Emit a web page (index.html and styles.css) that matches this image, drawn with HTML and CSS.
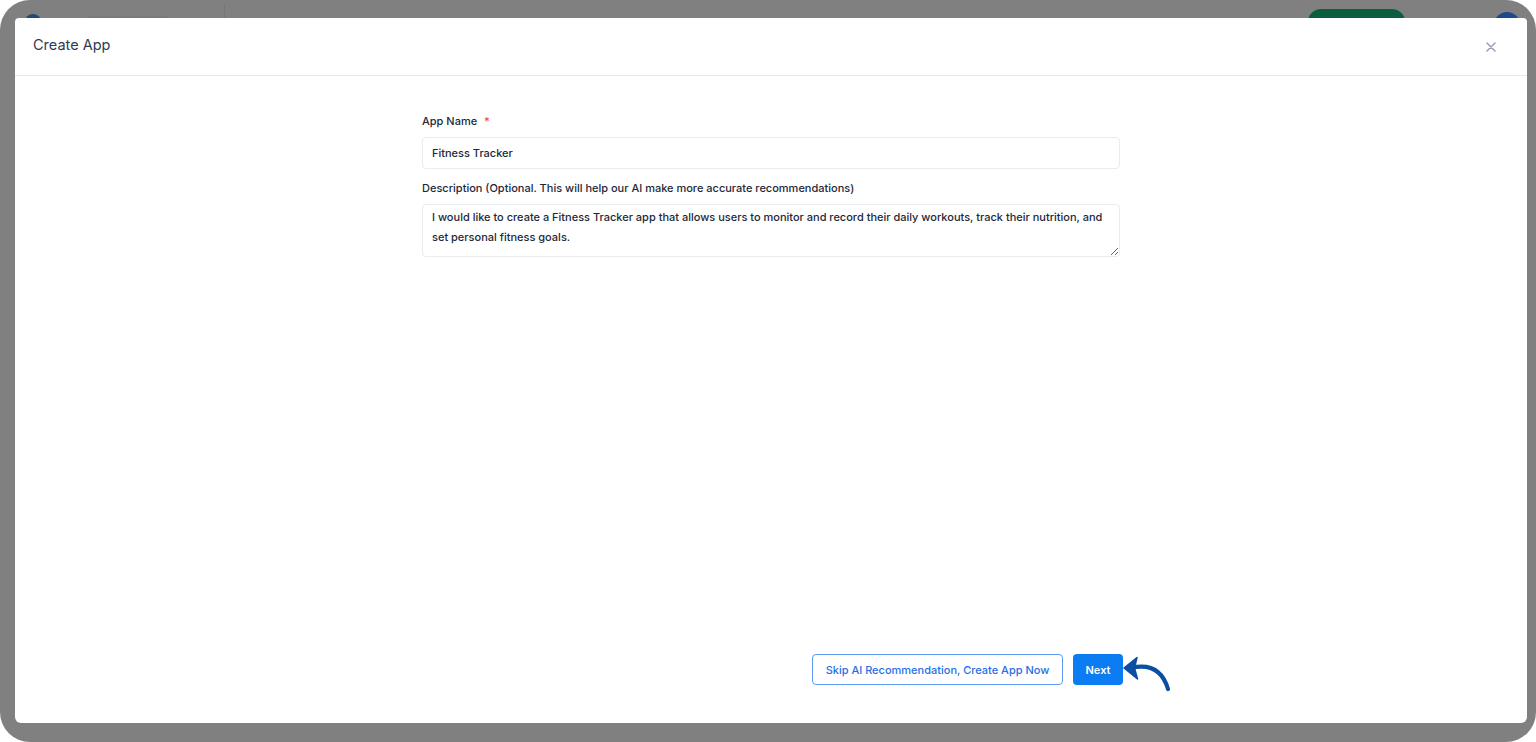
FILE: index.html
```html
<!DOCTYPE html>
<html lang="en">
<head>
    <meta charset="UTF-8">
    <meta name="viewport" content="width=device-width, initial-scale=1.0">
    <title>Create App</title>
    <link rel="stylesheet" href="styles.css">
</head>
<body>
    <div class="frame">
        <!-- the app behind the overlay, only its top edge shows -->
        <div class="bg-logo"></div>
        <div class="bg-brand"></div>
        <div class="bg-divider"></div>
        <div class="bg-button"></div>
        <div class="bg-avatar"></div>

        <div class="modal">
            <div class="modal-header">
                <h2>Create App</h2>
                <button class="close-btn" aria-label="Close">
                    <svg width="10" height="10" viewBox="0 0 10 10">
                        <path d="M1 1L9 9M9 1L1 9" stroke="#98a2b3" stroke-width="1.6" stroke-linecap="round"/>
                    </svg>
                </button>
            </div>
            <div class="modal-body">
                <div class="form">
                    <label class="field-label">App Name <span class="req">*</span></label>
                    <input class="text-input" type="text" value="Fitness Tracker">

                    <label class="field-label">Description (Optional. This will help our AI make more accurate recommendations)</label>
                    <textarea class="text-area">I would like to create a Fitness Tracker app that allows users to monitor and record their daily workouts, track their nutrition, and set personal fitness goals.</textarea>
                </div>
            </div>
            <div class="modal-footer">
                <div class="footer-inner">
                    <button class="btn-outline">Skip AI Recommendation, Create App Now</button>
                    <button class="btn-primary">Next</button>
                    <svg class="pointer" width="54" height="42" viewBox="0 0 54 42">
                        <path d="M9 15 C 26 11, 40 16, 46 36" fill="none" stroke="#0b4ea2" stroke-width="4.2" stroke-linecap="round"/>
                        <path d="M2 15 L15 4.5 L12.5 15 L15.5 26 Z" fill="#0b4ea2" stroke="#0b4ea2" stroke-width="1.5" stroke-linejoin="round"/>
                    </svg>
                </div>
            </div>
        </div>
    </div>
</body>
</html>
```

FILE: styles.css
```css
html, body {
    margin: 0;
    padding: 0;
    background: #ffffff;
}
body {
    font-family: Inter, "Noto Sans", Arial, sans-serif;
    width: 1536px;
    height: 742px;
    overflow: hidden;
}
.frame {
    position: relative;
    box-sizing: border-box;
    width: 1536px;
    height: 742px;
    background: #808080;
    border-radius: 30px;
    padding: 18px 9px 19px 15px;
    display: flex;
    overflow: hidden;
}

/* dimmed page under the overlay */
.bg-logo {
    position: absolute;
    left: 25px;
    top: 14px;
    width: 16px;
    height: 16px;
    border-radius: 50%;
    background: #1f4a78;
}
.bg-brand {
    position: absolute;
    left: 88px;
    top: 16px;
    width: 80px;
    height: 4px;
    background: #7a7a7a;
}
.bg-divider {
    position: absolute;
    left: 224px;
    top: 4px;
    width: 1px;
    height: 14px;
    background: #767676;
}
.bg-button {
    position: absolute;
    left: 1308px;
    top: 9px;
    width: 97px;
    height: 28px;
    border-radius: 13px;
    background: #0b5e3d;
}
.bg-avatar {
    position: absolute;
    left: 1494px;
    top: 12px;
    width: 26px;
    height: 26px;
    border-radius: 50%;
    background: #1b4a8a;
}

.modal {
    position: relative;
    flex: 1;
    background: #ffffff;
    border-radius: 4px 4px 6px 6px;
    display: flex;
    flex-direction: column;
}
.modal-header {
    height: 57px;
    border-bottom: 1px solid #e4e7ec;
    display: flex;
    align-items: center;
    justify-content: space-between;
    padding: 0 30px 0 18px;
}
.modal-header h2 {
    margin: 0 0 4px 0;
    font-size: 14.5px;
    font-weight: 400;
    color: #2f3b52;
}
.close-btn {
    border: none;
    background: none;
    padding: 0;
    width: 12px;
    height: 12px;
    display: flex;
    align-items: center;
    justify-content: center;
    margin-top: 1px;
}
.modal-body {
    flex: 1;
    display: flex;
    justify-content: center;
    padding-top: 37px;
}
.form {
    width: 698px;
    display: flex;
    flex-direction: column;
}
.field-label {
    font-size: 11px;
    font-weight: 500;
    color: #1d2939;
    line-height: 16px;
    margin-bottom: 8px;
}
.req {
    color: #e5484d;
    margin-left: 4px;
}
.text-input {
    box-sizing: border-box;
    height: 32px;
    border: 1px solid #e9ebef;
    border-radius: 4px;
    padding: 0 9px;
    font-family: inherit;
    font-size: 11px;
    font-weight: 500;
    color: #1d2939;
    margin-bottom: 11px;
    outline: none;
}
.text-area {
    box-sizing: border-box;
    height: 53px;
    border: 1px solid #e9ebef;
    border-radius: 4px;
    padding: 2px 9px;
    font-family: inherit;
    font-size: 11px;
    font-weight: 500;
    line-height: 20px;
    color: #1d2939;
    resize: vertical;
    outline: none;
}
.modal-footer {
    display: flex;
    justify-content: center;
    padding-bottom: 38px;
}
.footer-inner {
    position: relative;
    width: 704px;
    display: flex;
    justify-content: flex-end;
    gap: 10px;
}
.btn-outline, .btn-primary {
    height: 31px;
    border-radius: 4px;
    font-family: inherit;
    font-size: 11px;
    font-weight: 500;
    cursor: pointer;
}
.btn-outline {
    width: 251px;
    background: #ffffff;
    border: 1px solid #5b9bf3;
    color: #1f6fe5;
}
.btn-primary {
    width: 50px;
    background: #0b7cf1;
    border: none;
    color: #ffffff;
    font-weight: 600;
}
.pointer {
    position: absolute;
    left: 703px;
    top: -1px;
}
```
